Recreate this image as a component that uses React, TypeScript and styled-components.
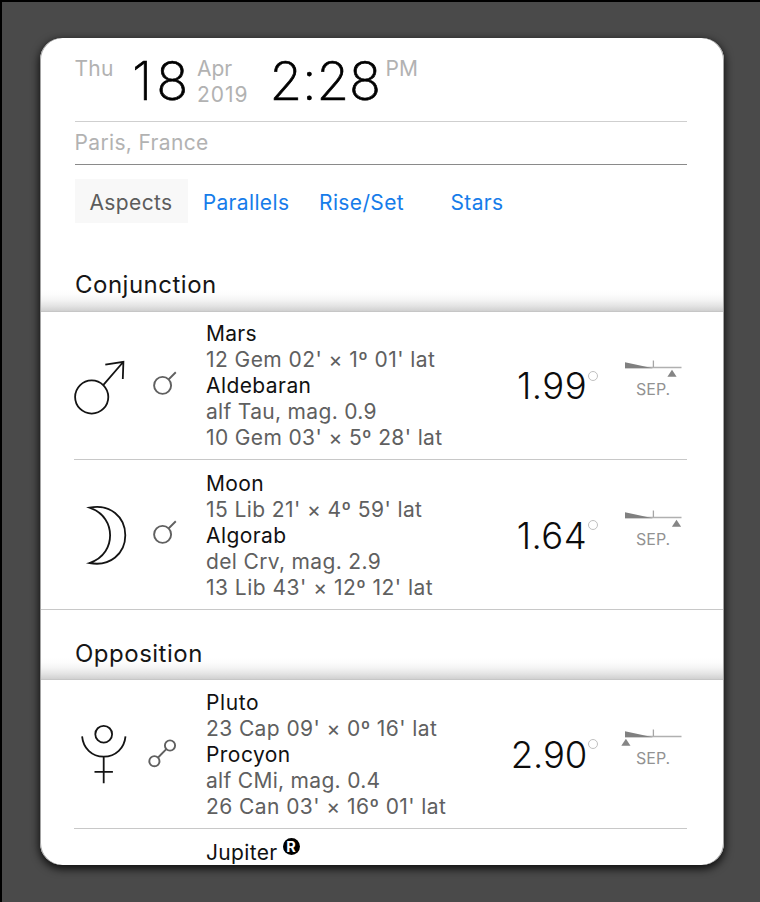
import React from "react";
import styled, { createGlobalStyle } from "styled-components";

const GlobalStyle = createGlobalStyle`
  * { box-sizing: border-box; }
  body {
    margin: 0;
    background: #4a4a4a;
    font-family: Inter, "Liberation Sans", sans-serif;
    overflow: hidden;
  }
`;

const Page = styled.div`
  width: 760px;
  height: 902px;
  padding: 36px 0 0 38px;
  border-top: 2px solid #000;
  border-left: 2px solid #000;
  background: #4a4a4a;
`;

const Card = styled.main`
  width: 684px;
  height: 827px;
  border-radius: 22px;
  background: #fff;
  overflow: hidden;
  box-shadow: 0 3px 8px 1px rgba(0, 0, 0, 0.8), inset 1px 0 0 #a4a4a4, inset -1px 0 0 #a4a4a4;
`;

const Header = styled.header`
  margin: 0 37px 0 34.5px;
  color: #b2b2b2;
  font-size: 21px;
`;

const DateRow = styled.div`
  display: grid;
  grid-template-columns: 57.5px 65px 72.5px 116px auto;
  height: 84px;
  padding-top: 18px;
  border-bottom: 1px solid #cfcfcf;
  line-height: 26px;
`;

const Caption = styled.span<{ $spacing: number }>`
  display: block;
  letter-spacing: ${(p) => p.$spacing}px;
  white-space: nowrap;
`;

const BigFigure = styled.span<{ $spacing: number }>`
  margin-top: -7px;
  color: #000;
  font-size: 53px;
  font-weight: 200;
  -webkit-text-stroke: 0.7px #000;
  line-height: 64px;
  letter-spacing: ${(p) => p.$spacing}px;
  white-space: nowrap;
`;

const Place = styled.div`
  height: 43px;
  padding-top: 8px;
  border-bottom: 1px solid #8a8a8a;
  line-height: 26px;
  letter-spacing: 0.34px;
`;

const Tabs = styled.nav`
  display: grid;
  grid-template-columns: 113px 117px 114px 117px;
  height: 44px;
  margin: 14px 0 0 34.5px;
`;

const Tab = styled.button<{ $active?: boolean }>`
  height: 44px;
  padding: 3px 0 0;
  border: 0;
  background: ${(p) => (p.$active ? "#f8f8f8" : "transparent")};
  color: ${(p) => (p.$active ? "#5c5c5c" : "#167cea")};
  font: 400 21px/41px Inter, "Liberation Sans", sans-serif;
  letter-spacing: 0.36px;
  text-align: center;
  white-space: nowrap;
`;

const SectionHeading = styled.h2<{ $height: number; $top: number }>`
  height: ${(p) => p.$height}px;
  margin: 0 1px;
  padding: ${(p) => p.$top}px 0 0 34px;
  border-bottom: 1px solid #c6c6c6;
  background: linear-gradient(to top, #d0d0d0 0, #e3e3e3 5px, #f4f4f4 11px, #fdfdfd 17px, rgba(255, 255, 255, 0) 21px);
  color: #161616;
  font-size: 24px;
  font-weight: 400;
  line-height: 30px;
  letter-spacing: 0.5px;
`;

const Entry = styled.article<{ $height: number; $top: number; $full?: boolean }>`
  display: grid;
  grid-template-columns: 71px 61px 301px 113px 1fr;
  height: ${(p) => p.$height}px;
  margin: 0 ${(p) => (p.$full ? 1 : 37)}px 0 ${(p) => (p.$full ? 1 : 34)}px;
  padding: ${(p) => p.$top}px 0 0 ${(p) => (p.$full ? 33 : 0)}px;
  border-bottom: 1px solid #c8c8c8;
`;

const Glyph = styled.svg`
  width: 60px;
  height: 66px;
  margin: 32px 0 0 -4px;
  fill: none;
  stroke: #141414;
  stroke-width: 1.8;
`;

const AspectGlyph = styled.svg`
  width: 36px;
  height: 36px;
  margin-top: 46.5px;
  fill: none;
  stroke: #606060;
  stroke-width: 1.9;
`;

const Details = styled.div`
  padding-top: 1px;
  font-size: 21px;
  line-height: 26px;
  white-space: nowrap;
`;

const Line = styled.div<{ $name?: boolean; $spacing?: number }>`
  color: ${(p) => (p.$name ? "#111" : "#606060")};
  letter-spacing: ${(p) => p.$spacing ?? 0.36}px;
`;

const Orb = styled.div`
  display: flex;
  justify-content: flex-end;
  padding: 44px 22px 0 0;
  color: #0c0c0c;
`;

const OrbValue = styled.span<{ $spacing: number }>`
  font-size: 36.5px;
  font-weight: 300;
  line-height: 44px;
  letter-spacing: ${(p) => p.$spacing}px;
  white-space: nowrap;
`;

const DegreeRing = styled.span`
  flex: none;
  width: 10px;
  height: 10px;
  margin: 6.5px 0 0 1px;
  border: 1px solid #c0c0c0;
  border-radius: 50%;
`;

const Motion = styled.div`
  padding-top: 40px;
  color: #929292;
  font-size: 16px;
  line-height: 20px;
`;

const Scale = styled.svg`
  display: block;
  width: 64px;
  height: 18px;
`;

const Phase = styled.div`
  padding: 1px 0 0 16px;
`;

const LastEntry = styled.div`
  display: flex;
  align-items: flex-start;
  margin-left: 166px;
  padding-top: 11px;
  color: #111;
  font-size: 21px;
  line-height: 26px;
  letter-spacing: 0.35px;
`;

const Retrograde = styled.span`
  width: 17px;
  height: 17px;
  margin: -2px 0 0 5px;
  border-radius: 50%;
  background: #000;
  color: #fff;
  font-size: 14.5px;
  font-weight: 700;
  line-height: 17px;
  letter-spacing: 0;
  text-align: center;
`;

const Mars = () => (
  <Glyph viewBox="0 0 60 66">
    <circle cx="21.7" cy="45" r="16.6" />
    <path d="M33.2 33.2 53.2 10M35.3 12.6 53.4 9.8 52.8 27" />
  </Glyph>
);

const Moon = () => (
  <Glyph viewBox="0 0 60 66">
    <path d="M19.5 5.6C40 1.5 55.3 15 55.3 33.3S40 65 19.5 61C34.5 56 40.1 44 40.1 33.3 40.1 22.6 34.5 10.8 19.5 5.6Z" />
  </Glyph>
);

const Pluto = () => (
  <Glyph viewBox="0 0 60 66">
    <circle cx="33.7" cy="13.2" r="8.4" />
    <path d="M12.1 15.3C13.2 27 21.5 35.6 33.7 35.6S54.4 27 55.5 15.3M33.7 35.6V62.3M24.5 50.8H42.9" />
  </Glyph>
);

const Conjunction = () => (
  <AspectGlyph viewBox="0 0 36 36">
    <circle cx="17.6" cy="18.4" r="8.5" />
    <path d="M23.8 12.2 30.8 5.3" />
  </AspectGlyph>
);

const Opposition = () => (
  <AspectGlyph viewBox="0 0 36 36">
    <circle cx="9.4" cy="26.2" r="5.1" />
    <circle cx="25" cy="10.5" r="5.1" />
    <path d="M13.1 22.5 21.3 14.2" />
  </AspectGlyph>
);

const Separation = ({ at }: { at: number }) => (
  <Motion>
    <Scale viewBox="0 0 64 18">
      <path d="M5 7.5H61.5" stroke="#b0b0b0" strokeWidth="1.6" />
      <path d="M33.4.5V7" stroke="#a6a6a6" strokeWidth="1.3" />
      <path d="M5 2.2 33 8.2H5Z" fill="#808080" />
      <path d={`M${at} 9.8l4.6 7h-9.2Z`} fill="#858585" />
    </Scale>
    <Phase>SEP.</Phase>
  </Motion>
);

interface Item {
  glyph: React.ReactNode;
  aspect: React.ReactNode;
  lines: [text: string, spacing: number][];
  orb: string;
  orbSpacing: number;
  at: number;
  height: number;
  top: number;
  full?: boolean;
}

const conjunctions: Item[] = [
  {
    glyph: <Mars />,
    aspect: <Conjunction />,
    lines: [
      ["Mars", 0.3],
      ["12 Gem 02' × 1º 01' lat", 0.44],
      ["Aldebaran", 0.42],
      ["alf Tau, mag. 0.9", 0.32],
      ["10 Gem 03' × 5º 28' lat", 0.37],
    ],
    orb: "1.99",
    orbSpacing: 0.4,
    at: 52,
    height: 148,
    top: 8,
  },
  {
    glyph: <Moon />,
    aspect: <Conjunction />,
    lines: [
      ["Moon", 0.4],
      ["15 Lib 21' × 4º 59' lat", 0.41],
      ["Algorab", 0.42],
      ["del Crv, mag. 2.9", 0.34],
      ["13 Lib 43' × 12º 12' lat", 0.48],
    ],
    orb: "1.64",
    orbSpacing: 0.4,
    at: 56.5,
    height: 150,
    top: 9.5,
    full: true,
  },
];

const oppositions: Item[] = [
  {
    glyph: <Pluto />,
    aspect: <Opposition />,
    lines: [
      ["Pluto", 0.6],
      ["23 Cap 09' × 0º 16' lat", 0.4],
      ["Procyon", 0.45],
      ["alf CMi, mag. 0.4", 0.3],
      ["26 Can 03' × 16º 01' lat", 0.43],
    ],
    orb: "2.90",
    orbSpacing: -0.2,
    at: 5.9,
    height: 149,
    top: 8.5,
  },
];

const EntryRow = ({ item }: { item: Item }) => (
  <Entry $height={item.height} $top={item.top} $full={item.full}>
    {item.glyph}
    {item.aspect}
    <Details>
      {item.lines.map(([text, spacing], i) => (
        <Line key={text} $name={i === 0 || i === 2} $spacing={spacing}>
          {text}
        </Line>
      ))}
    </Details>
    <Orb>
      <OrbValue $spacing={item.orbSpacing}>{item.orb}</OrbValue>
      <DegreeRing />
    </Orb>
    <Separation at={item.at} />
  </Entry>
);

export default function App() {
  return (
    <>
      <GlobalStyle />
      <Page>
        <Card>
          <Header>
            <DateRow>
              <Caption $spacing={0.3}>Thu</Caption>
              <BigFigure $spacing={4}>18</BigFigure>
              <div>
                <Caption $spacing={0}>Apr</Caption>
                <Caption $spacing={1}>2019</Caption>
              </div>
              <BigFigure $spacing={-0.17}>2:28</BigFigure>
              <Caption $spacing={0}>PM</Caption>
            </DateRow>
            <Place>Paris, France</Place>
          </Header>
          <Tabs>
            <Tab $active>Aspects</Tab>
            <Tab>Parallels</Tab>
            <Tab>Rise/Set</Tab>
            <Tab>Stars</Tab>
          </Tabs>
          <SectionHeading $height={89} $top={47}>Conjunction</SectionHeading>
          {conjunctions.map((item) => (
            <EntryRow key={item.lines[0][0]} item={item} />
          ))}
          <SectionHeading $height={70} $top={29}>Opposition</SectionHeading>
          {oppositions.map((item) => (
            <EntryRow key={item.lines[0][0]} item={item} />
          ))}
          <LastEntry>
            Jupiter<Retrograde>R</Retrograde>
          </LastEntry>
        </Card>
      </Page>
    </>
  );
}
